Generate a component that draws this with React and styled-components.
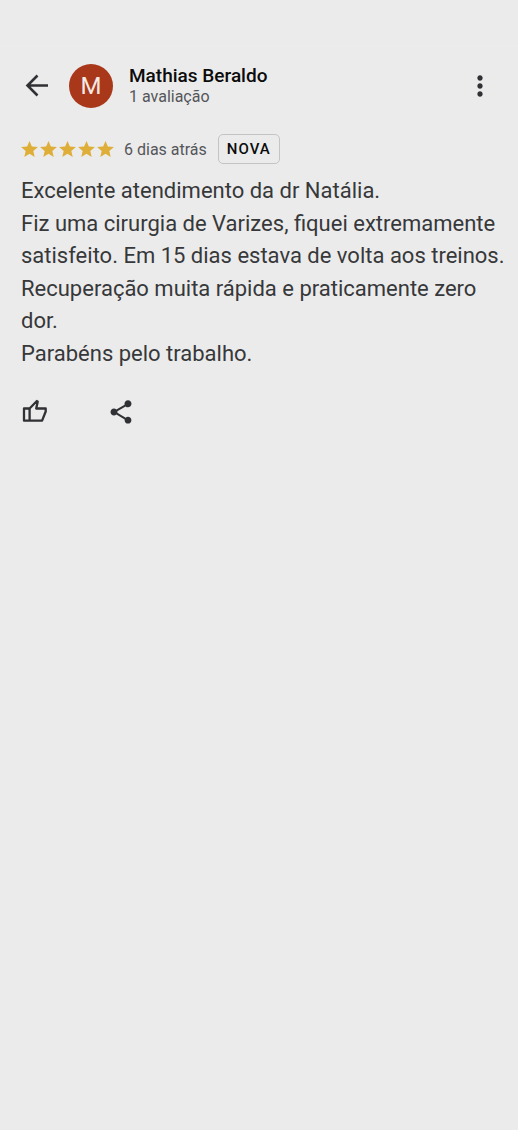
import React, { useState } from 'react';
import styled, { createGlobalStyle } from 'styled-components';
import { MdMoreVert, MdShare } from 'react-icons/md';

const review = {
  author: 'Mathias Beraldo',
  count: '1 avaliação',
  rating: 5,
  date: '6 dias atrás',
  lines: [
    'Excelente atendimento da dr Natália.',
    'Fiz uma cirurgia de Varizes, fiquei extremamente satisfeito. Em 15 dias estava de volta aos treinos.',
    'Recuperação muita rápida e praticamente zero dor.',
    'Parabéns pelo trabalho.',
  ],
};

const Star = () => (
  <svg width='17' height='16' viewBox='2 2 20 19' aria-hidden='true'>
    <path
      fill='#dfae38'
      d='M12 17.27 18.18 21l-1.64-7.03L22 9.24l-7.19-.61L12 2 9.19 8.63 2 9.24l5.46 4.73L5.82 21z'
    />
  </svg>
);

const ArrowBack = () => (
  <svg width='32' height='32' viewBox='0 0 32 32' aria-hidden='true'>
    <path
      fill='none'
      stroke='currentColor'
      strokeWidth='2.6'
      d='M27 15.5H6.5M16.5 5.5l-10 10 10 10'
    />
  </svg>
);

const ThumbUp = () => (
  <svg width='28' height='28' viewBox='0 0 28 28' aria-hidden='true'>
    <path
      fill='none'
      stroke='currentColor'
      strokeWidth='2.3'
      strokeLinejoin='round'
      d='M3 10.5h5.6v12.2H3zM8.6 10.5l7.3-7.5.8.7-1.5 6.8h9.5v3l-3.6 9.2H8.6'
    />
  </svg>
);

function App() {
  const [liked, setLiked] = useState(false);

  return (
    <>
      <GlobalStyle />
      <StatusBar />
      <Page>
        <Header>
          <IconButton type='button' aria-label='Voltar'>
            <ArrowBack />
          </IconButton>
          <Avatar>M</Avatar>
          <Author>
            <Name>{review.author}</Name>
            <Count>{review.count}</Count>
          </Author>
          <IconButton type='button' aria-label='Mais opções'>
            <MdMoreVert size={32} />
          </IconButton>
        </Header>

        <Meta>
          <Stars role='img' aria-label={`${review.rating} estrelas`}>
            {Array.from({ length: review.rating }, (_, i) => (
              <Star key={i} />
            ))}
          </Stars>
          <When>{review.date}</When>
          <Badge>NOVA</Badge>
        </Meta>

        <Body>
          {review.lines.map((line) => (
            <p key={line}>{line}</p>
          ))}
        </Body>

        <Actions>
          <IconButton
            type='button'
            aria-label='Gostei'
            aria-pressed={liked}
            onClick={() => setLiked(!liked)}
          >
            <ThumbUp />
          </IconButton>
          <IconButton type='button' aria-label='Compartilhar'>
            <MdShare size={28} />
          </IconButton>
        </Actions>
      </Page>
    </>
  );
}

export default App;

const GlobalStyle = createGlobalStyle`
  * {
    box-sizing: border-box;
  }

  body {
    margin: 0;
    background: #ebebeb;
    color: #37383a;
    font-family: Roboto, 'Liberation Sans', sans-serif;
  }
`;

const StatusBar = styled.div`
  height: 46px;
  border-bottom: 1px solid #ededed;
`;

const Page = styled.main`
  padding: 16px 12px 16px 21px;
`;

const Header = styled.header`
  display: flex;
  align-items: center;
  height: 48px;
  padding-right: 10px;
`;

const IconButton = styled.button`
  display: flex;
  padding: 0;
  border: none;
  background: transparent;
  color: #303134;
  cursor: pointer;
`;

const Avatar = styled.div`
  display: flex;
  justify-content: center;
  align-items: center;
  width: 44px;
  height: 44px;
  margin: 0 16px;
  border-radius: 50%;
  background: #a9381a;
  color: #f5e9e5;
  font-size: 24px;
`;

const Author = styled.div`
  flex: 1;
`;

const Name = styled.h1`
  margin: 0;
  color: #0c0c0c;
  font-size: 19px;
  font-weight: 500;
  line-height: 22px;
`;

const Count = styled.div`
  color: #55565a;
  font-size: 16px;
  line-height: 20px;
`;

const Meta = styled.div`
  display: flex;
  align-items: center;
  margin-top: 24px;
`;

const Stars = styled.div`
  display: flex;
  gap: 2px;
`;

const When = styled.span`
  margin: 0 11px 0 10px;
  color: #55565a;
  font-size: 16px;
`;

const Badge = styled.span`
  padding: 0 8px;
  border: 1px solid #c4c4c4;
  border-radius: 5px;
  color: #0c0c0c;
  font-size: 15px;
  font-weight: 500;
  line-height: 28px;
  letter-spacing: 1px;
`;

const Body = styled.div`
  display: grid;
  gap: 1px;
  margin-top: 11px;
  font-size: 22px;
  line-height: 32px;

  p {
    margin: 0;
  }
`;

const Actions = styled.div`
  display: flex;
  gap: 58px;
  margin-top: 28px;
`;
